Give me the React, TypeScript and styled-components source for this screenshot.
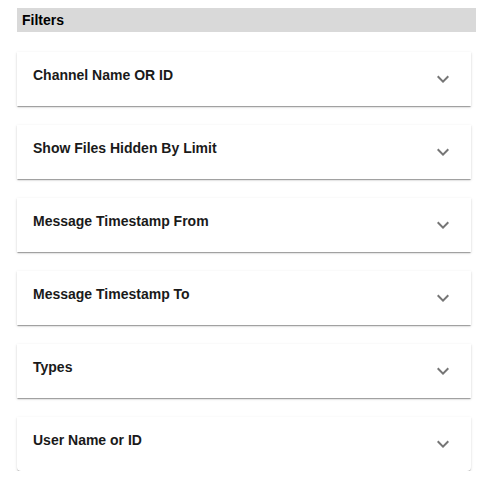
import styled, { createGlobalStyle } from "styled-components";

const GlobalStyle = createGlobalStyle`
    body {
        margin: 0;
        background: #ffffff;
        font-family: "Liberation Sans", Arial, sans-serif;
    }
`;

const SdivPage = styled.div`
    padding: 8px 0 0 17px;
    width: 459px;
`;

const SdivHeader = styled.div`
    height: 24px;
    background: #d9d9d9;
    padding-left: 5px;
    display: flex;
    align-items: center;
    font-size: 14px;
    font-weight: bold;
    color: #000;
`;

const SdivList = styled.div`
    display: flex;
    flex-direction: column;
    gap: 19px;
    margin-top: 20px;
    width: 454px;
`;

const SdivCard = styled.div<{ $last?: boolean }>`
    height: 54px;
    background: #fff;
    border-radius: ${(p) => (p.$last ? "0 0 4px 4px" : "0")};
    box-shadow: 0 2px 1px -1px rgba(0, 0, 0, 0.2), 0 1px 1px 0 rgba(0, 0, 0, 0.14),
        0 1px 3px 0 rgba(0, 0, 0, 0.12);
    display: flex;
    align-items: flex-start;
    justify-content: space-between;
    padding: 15px 16px 0 16px;
    box-sizing: border-box;
`;

const Stitle = styled.span`
    font-size: 14px;
    line-height: 16px;
    font-weight: bold;
    color: #1a1a1a;
`;

const SIcon = styled.svg`
    width: 24px;
    height: 24px;
    fill: rgba(0, 0, 0, 0.54);
    flex-shrink: 0;
`;

const filters = [
    "Channel Name OR ID",
    "Show Files Hidden By Limit",
    "Message Timestamp From",
    "Message Timestamp To",
    "Types",
    "User Name or ID",
];

const App = () => {
    return (
        <>
            <GlobalStyle />
            <SdivPage>
                <SdivHeader>Filters</SdivHeader>
                <SdivList>
                    {filters.map((name, index) => (
                        <SdivCard key={index} $last={index === filters.length - 1}>
                            <Stitle>{name}</Stitle>
                            <SIcon viewBox="0 0 24 24">
                                <path d="M16.59 8.59 12 13.17 7.41 8.59 6 10l6 6 6-6z" />
                            </SIcon>
                        </SdivCard>
                    ))}
                </SdivList>
            </SdivPage>
        </>
    );
};

export default App;
